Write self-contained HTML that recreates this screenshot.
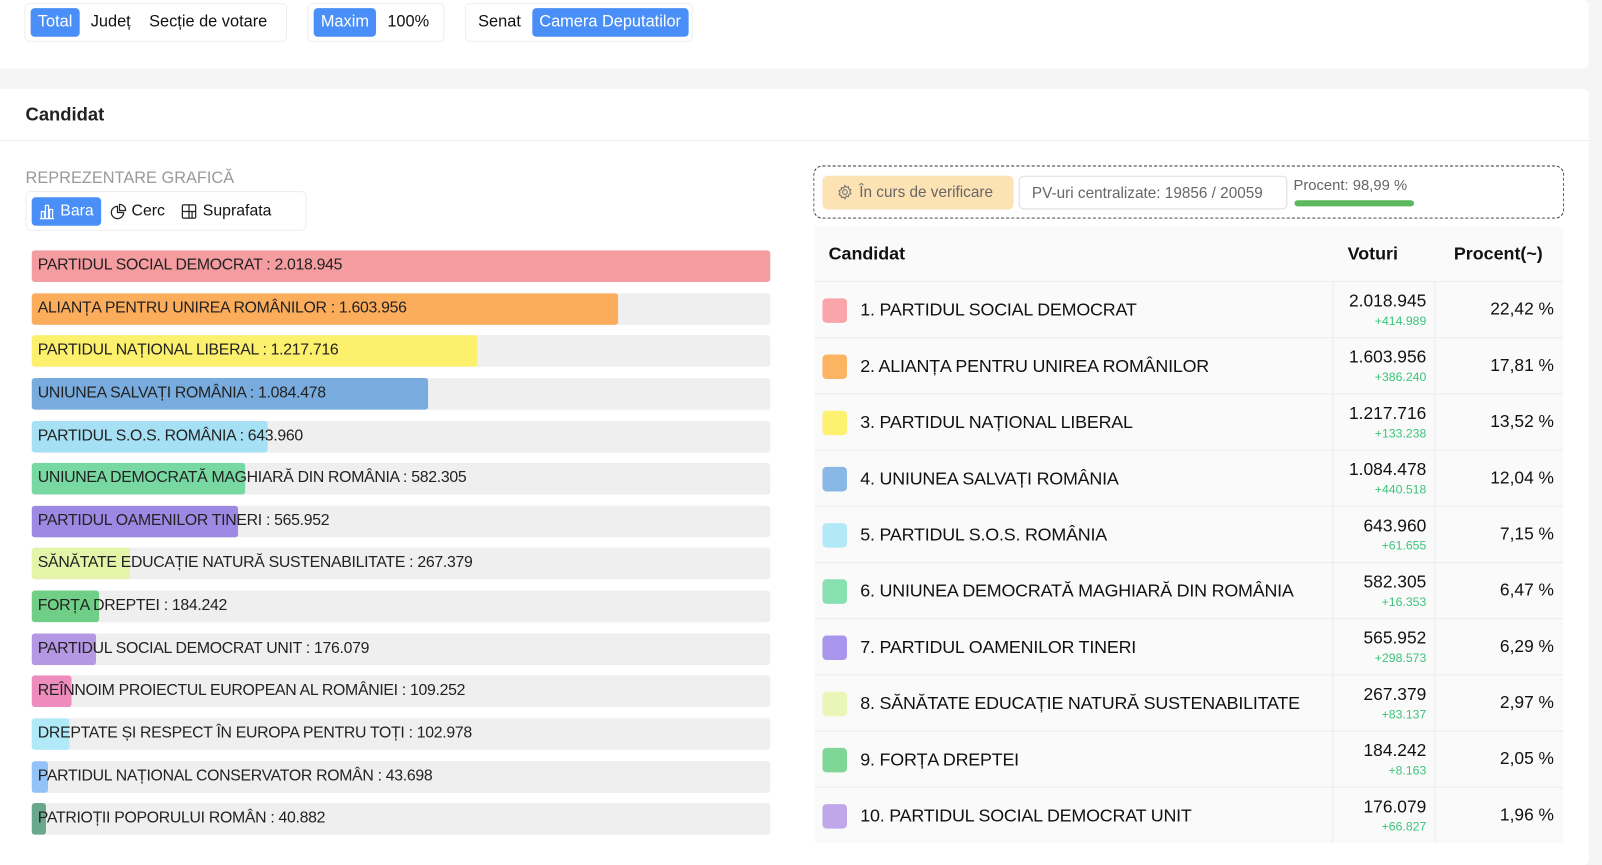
<!DOCTYPE html>
<html><head><meta charset="utf-8"><style>
*{box-sizing:border-box;margin:0;padding:0}
body{width:1602px;height:842px;overflow:hidden;background:#f5f5f5;font-family:"Liberation Sans",sans-serif;color:#111;position:relative}
#w{position:absolute;left:0;top:0;width:1568px;height:824px;transform:scale(1.0217);transform-origin:0 0}
.card{position:absolute;left:0;width:1555px;background:#fff;border-radius:0 6px 6px 0}
.grp{position:absolute;top:3px;height:38px;border:1px solid #eee;border-radius:5px;background:#fff;display:flex;align-items:center;padding:0 5px;gap:2px;font-size:15.5px}
.top span{font-size:16px}
.grp span{padding:5px 7px;border-radius:4px;white-space:nowrap;display:flex;align-items:center;gap:5px}
.on{background:#4a8ff7;color:#fff}
.bar{position:absolute;left:31px;width:723px;height:31px;background:#efefef;border-radius:3px;overflow:hidden}
.bar i{position:absolute;left:0;top:0;bottom:0;border-radius:3px}
.bar b{position:absolute;left:6px;top:6px;font-weight:normal;font-size:15.5px;letter-spacing:-0.3px;color:#222;white-space:nowrap}
.tbl{position:absolute;left:797px;top:222px;width:733px;background:#fafafa}
.row{position:relative;height:55px;border-top:1px solid #ececec}
.sw{position:absolute;left:8px;top:16px;width:24px;height:24px;border-radius:4px}
.nm{position:absolute;left:45px;top:17px;font-size:17.5px;letter-spacing:-0.2px}
.vc{position:absolute;left:507px;top:0;width:101px;height:54px;border-left:1px solid #ececec;border-right:1px solid #ececec}
.v{position:absolute;right:8px;top:9px;font-size:17px}
.d{position:absolute;right:8px;top:31px;font-size:12px;color:#3cc47a}
.p{position:absolute;right:9px;top:17px;font-size:17px}
</style></head><body><div id="w">
<div class="card" style="top:0;height:67px">
 <div class="grp top" style="left:24px;width:257px;gap:4px"><span class="on">Total</span><span>Județ</span><span>Secție de votare</span></div>
 <div class="grp top" style="left:301px;width:134px;gap:4px"><span class="on">Maxim</span><span>100%</span></div>
 <div class="grp top" style="left:455px;width:223px;gap:4px"><span>Senat</span><span class="on">Camera Deputatilor</span></div>
</div>
<div class="card" style="top:87px;height:760px">
 <div style="position:absolute;left:25px;top:15px;font-size:18px;font-weight:bold;color:#222">Candidat</div>
 <div style="position:absolute;left:0;right:0;top:50px;border-top:1px solid #eee"></div>
 <div style="position:absolute;left:25px;top:79px;font-size:16px;color:#9a9a9a">REPREZENTARE GRAFICĂ</div>
 <div class="grp" style="left:25px;top:100px;width:275px;height:39px">
  <span class="on"><svg width="16" height="16" viewBox="0 0 16 16" fill="none" stroke="#fff" stroke-width="1.2"><path d="M1 15h14M2.5 15V8h3v7M6.5 15V2h3v13M10.5 15V6h3v9"/></svg>Bara</span>
  <span><svg width="16" height="16" viewBox="0 0 16 16" fill="none" stroke="#222" stroke-width="1.2"><path d="M7 3a6 6 0 1 0 6 6H7z"/><path d="M9 1v6h6a6 6 0 0 0-6-6z"/></svg>Cerc</span>
  <span><svg width="16" height="16" viewBox="0 0 16 16" fill="none" stroke="#222" stroke-width="1.2"><rect x="1.5" y="1.5" width="13" height="13" rx="1"/><path d="M1.5 8h13M8 8v6.5M8 1.5V8M11 8v6.5"/></svg>Suprafata</span></div>
 <div style="position:absolute;left:796px;top:75px;width:735px;height:52px;border:1.5px dashed #333;border-radius:9px">
  <div style="position:absolute;left:8px;top:9px;height:33px;width:187px;background:#fde2b4;border-radius:5px;font-size:15px;color:#666;padding:8px 0 0 14px;display:flex;gap:6px"><svg width="16" height="16" viewBox="0 0 16 16" fill="none" stroke="#777" stroke-width="1.1"><circle cx="8" cy="8" r="2.3"/><path d="M8 1.5l1.2 1.8 2.1-.6.4 2.1 2 .9-.9 2 1 1.9-2 .8-.4 2.1-2.1-.5L8 14.5l-1.3-1.6-2.1.5-.4-2.1-2-.8 1-1.9-.9-2 2-.9.4-2.1 2.1.6z"/></svg>În curs de verificare</div>
  <div style="position:absolute;left:200px;top:9px;height:33px;width:263px;border:1px solid #ddd;border-radius:5px;font-size:15px;color:#666;padding:8px 0 0 12px">PV-uri centralizate: 19856 / 20059</div>
  <div style="position:absolute;left:469px;top:11px;font-size:14.5px;color:#666">Procent: 98,99 %</div>
  <div style="position:absolute;left:470px;top:33px;width:117px;height:6px;background:#5cb85c;border-radius:3px"></div>
 </div>
</div>
<div class="bar" style="top:245px"><i style="width:723px;background:#f59ca0"></i><b>PARTIDUL SOCIAL DEMOCRAT : 2.018.945</b></div>
<div class="bar" style="top:287px"><i style="width:574px;background:#fbad5c"></i><b>ALIANȚA PENTRU UNIREA ROMÂNILOR : 1.603.956</b></div>
<div class="bar" style="top:328px"><i style="width:436px;background:#fdf06c"></i><b>PARTIDUL NAȚIONAL LIBERAL : 1.217.716</b></div>
<div class="bar" style="top:370px"><i style="width:388px;background:#78acdf"></i><b>UNIUNEA SALVAȚI ROMÂNIA : 1.084.478</b></div>
<div class="bar" style="top:412px"><i style="width:231px;background:#a6e0f4"></i><b>PARTIDUL S.O.S. ROMÂNIA : 643.960</b></div>
<div class="bar" style="top:453px"><i style="width:209px;background:#78d8a2"></i><b>UNIUNEA DEMOCRATĂ MAGHIARĂ DIN ROMÂNIA : 582.305</b></div>
<div class="bar" style="top:495px"><i style="width:202px;background:#9d88e4"></i><b>PARTIDUL OAMENILOR TINERI : 565.952</b></div>
<div class="bar" style="top:536px"><i style="width:96px;background:#e4f4a8"></i><b>SĂNĂTATE EDUCAȚIE NATURĂ SUSTENABILITATE : 267.379</b></div>
<div class="bar" style="top:578px"><i style="width:66px;background:#6fcf86"></i><b>FORȚA DREPTEI : 184.242</b></div>
<div class="bar" style="top:620px"><i style="width:63px;background:#b598e4"></i><b>PARTIDUL SOCIAL DEMOCRAT UNIT : 176.079</b></div>
<div class="bar" style="top:661px"><i style="width:39px;background:#ee8dbd"></i><b>REÎNNOIM PROIECTUL EUROPEAN AL ROMÂNIEI : 109.252</b></div>
<div class="bar" style="top:703px"><i style="width:37px;background:#b0eaf9"></i><b>DREPTATE ȘI RESPECT ÎN EUROPA PENTRU TOȚI : 102.978</b></div>
<div class="bar" style="top:745px"><i style="width:16px;background:#93c2f8"></i><b>PARTIDUL NAȚIONAL CONSERVATOR ROMÂN : 43.698</b></div>
<div class="bar" style="top:786px"><i style="width:14px;background:#6aa88e"></i><b>PATRIOȚII POPORULUI ROMÂN : 40.882</b></div>
<div class="tbl">
 <div style="position:relative;height:53px;font-weight:bold;font-size:17.5px">
  <div style="position:absolute;left:14px;top:16px">Candidat</div>
  <div style="position:absolute;left:522px;top:16px">Voturi</div>
  <div style="position:absolute;right:20px;top:16px">Procent(~)</div>
 </div>
 <div class="row"><div class="sw" style="background:#f9a5a9"></div><div class="nm">1. PARTIDUL SOCIAL DEMOCRAT</div><div class="vc"><div class="v">2.018.945</div><div class="d">+414.989</div></div><div class="p">22,42 %</div></div>
 <div class="row"><div class="sw" style="background:#fcb463"></div><div class="nm">2. ALIANȚA PENTRU UNIREA ROMÂNILOR</div><div class="vc"><div class="v">1.603.956</div><div class="d">+386.240</div></div><div class="p">17,81 %</div></div>
 <div class="row"><div class="sw" style="background:#fdf171"></div><div class="nm">3. PARTIDUL NAȚIONAL LIBERAL</div><div class="vc"><div class="v">1.217.716</div><div class="d">+133.238</div></div><div class="p">13,52 %</div></div>
 <div class="row"><div class="sw" style="background:#8ab8e6"></div><div class="nm">4. UNIUNEA SALVAȚI ROMÂNIA</div><div class="vc"><div class="v">1.084.478</div><div class="d">+440.518</div></div><div class="p">12,04 %</div></div>
 <div class="row"><div class="sw" style="background:#b3e8f7"></div><div class="nm">5. PARTIDUL S.O.S. ROMÂNIA</div><div class="vc"><div class="v">643.960</div><div class="d">+61.655</div></div><div class="p">7,15 %</div></div>
 <div class="row"><div class="sw" style="background:#88e0b0"></div><div class="nm">6. UNIUNEA DEMOCRATĂ MAGHIARĂ DIN ROMÂNIA</div><div class="vc"><div class="v">582.305</div><div class="d">+16.353</div></div><div class="p">6,47 %</div></div>
 <div class="row"><div class="sw" style="background:#a895ec"></div><div class="nm">7. PARTIDUL OAMENILOR TINERI</div><div class="vc"><div class="v">565.952</div><div class="d">+298.573</div></div><div class="p">6,29 %</div></div>
 <div class="row"><div class="sw" style="background:#e9f6b6"></div><div class="nm">8. SĂNĂTATE EDUCAȚIE NATURĂ SUSTENABILITATE</div><div class="vc"><div class="v">267.379</div><div class="d">+83.137</div></div><div class="p">2,97 %</div></div>
 <div class="row"><div class="sw" style="background:#7fd795"></div><div class="nm">9. FORȚA DREPTEI</div><div class="vc"><div class="v">184.242</div><div class="d">+8.163</div></div><div class="p">2,05 %</div></div>
 <div class="row"><div class="sw" style="background:#c0a6ea"></div><div class="nm">10. PARTIDUL SOCIAL DEMOCRAT UNIT</div><div class="vc"><div class="v">176.079</div><div class="d">+66.827</div></div><div class="p">1,96 %</div></div>
</div>
</div></body></html>
